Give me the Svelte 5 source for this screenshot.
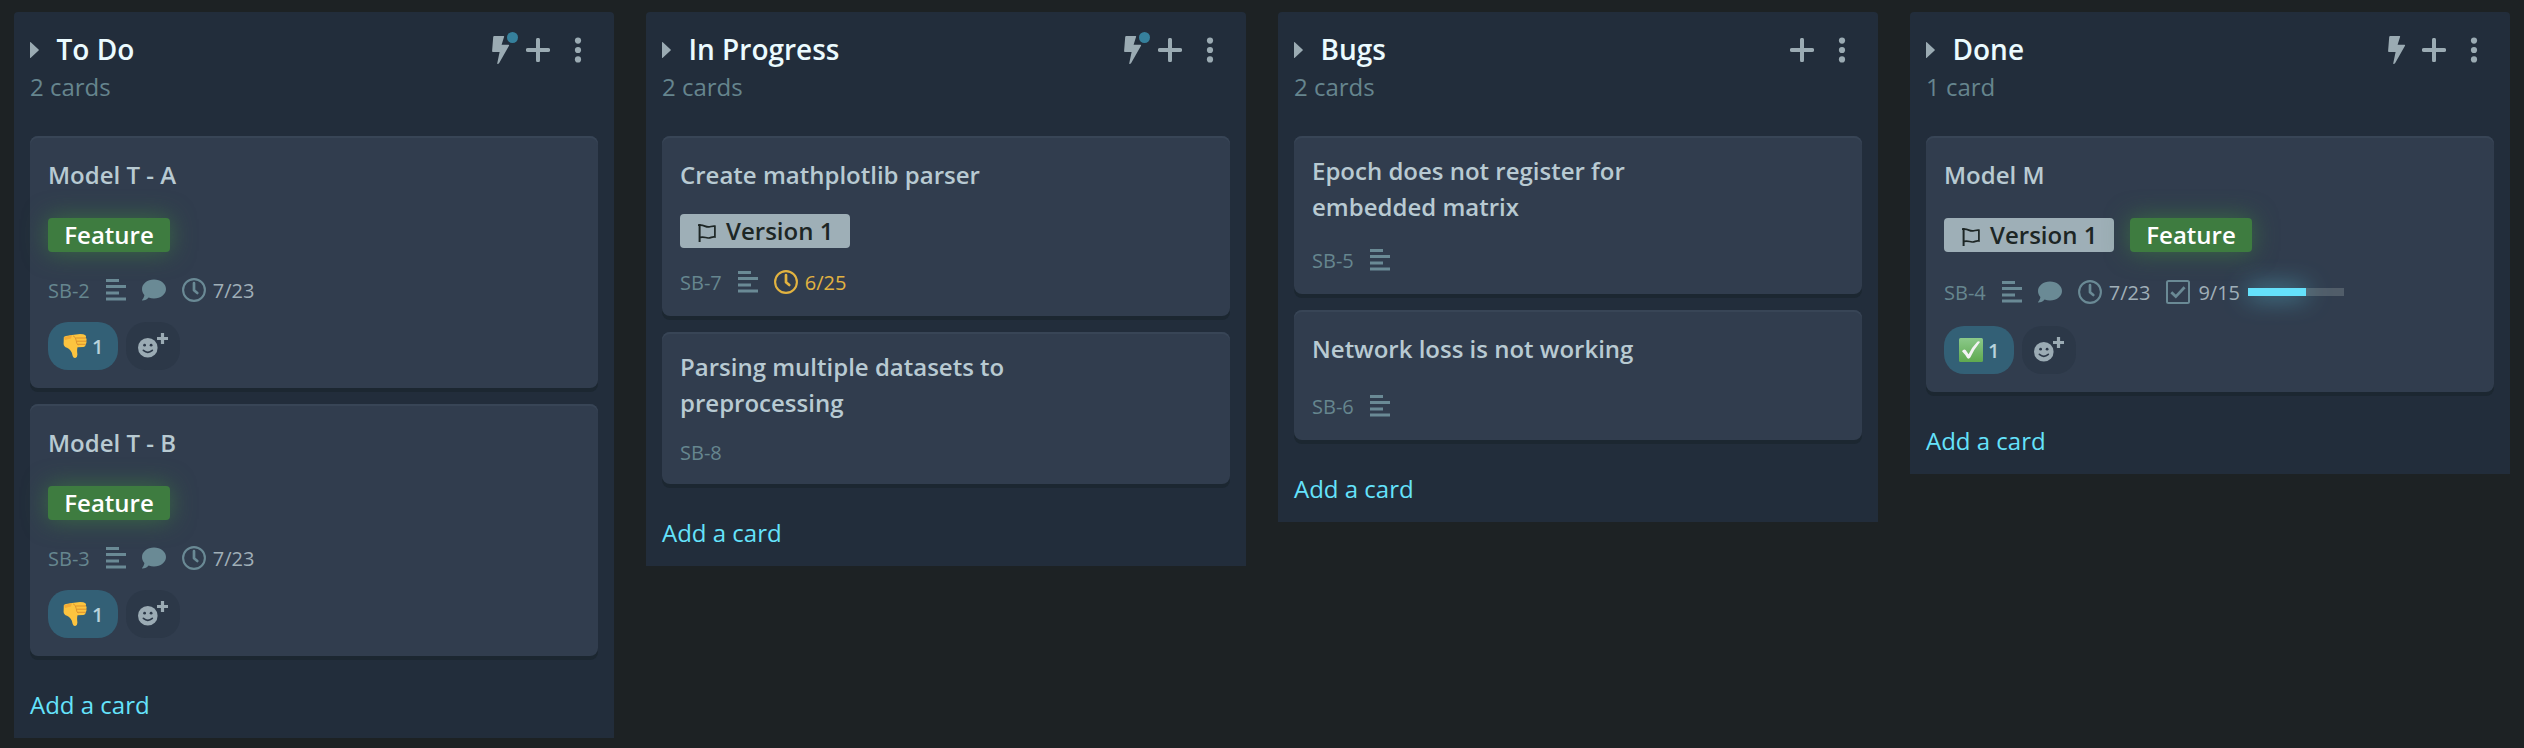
<script>
  const columns = [
    {
      title: 'To Do', count: '2 cards', bolt: true, dot: true,
      cards: [
        { title: ['Model T - A'], feature: true, id: 'SB-2', desc: true, comment: true, date: '7/23', reaction: 'down' },
        { title: ['Model T - B'], feature: true, id: 'SB-3', desc: true, comment: true, date: '7/23', reaction: 'down' }
      ]
    },
    {
      title: 'In Progress', count: '2 cards', bolt: true, dot: true,
      cards: [
        { title: ['Create mathplotlib parser'], version: true, id: 'SB-7', desc: true, date: '6/25', due: true },
        { title: ['Parsing multiple datasets to', 'preprocessing'], id: 'SB-8' }
      ]
    },
    {
      title: 'Bugs', count: '2 cards',
      cards: [
        { title: ['Epoch does not register for', 'embedded matrix'], id: 'SB-5', desc: true },
        { title: ['Network loss is not working'], id: 'SB-6', desc: true }
      ]
    },
    {
      title: 'Done', count: '1 card', bolt: true,
      cards: [
        { title: ['Model M'], version: true, feature: true, id: 'SB-4', desc: true, comment: true, date: '7/23', done: 9, total: 15, reaction: 'check' }
      ]
    }
  ];
</script>

<main class="board">
  {#each columns as col}
    <section class="column">
      <header>
        <svg class="arrow" width="10" height="18" viewBox="0 0 10 18"><path d="M0 1.5Q0 .6.8 1.2L8.6 8.4Q9.3 9 8.6 9.6L.8 16.8Q0 17.4 0 16.5z" /></svg>
        <h2>{col.title}</h2>
        <div class="tools">
          {#if col.bolt}
            <span class="bolt">
              <svg width="18" height="28" viewBox="0 0 18 28"><path d="M2.2 0H11.6Q12.4 0 12.1.8L9.6 8.8H16.4Q17.5 8.8 17 9.8L7.2 27Q6.6 28 5.4 28L5.2 27.4 7.6 16H.9Q0 16 .1 15L1.2.9Q1.3 0 2.2 0z" /></svg>
              {#if col.dot}<i></i>{/if}
            </span>
          {/if}
          <svg class="plus" width="24" height="24" viewBox="0 0 24 24"><path d="M12 1.8V22.2M1.8 12H22.2" fill="none" stroke="currentColor" stroke-width="4" stroke-linecap="round" /></svg>
          <svg width="8" height="26" viewBox="0 0 8 26"><circle cx="4" cy="3.6" r="3.1" /><circle cx="4" cy="13" r="3.1" /><circle cx="4" cy="22.4" r="3.1" /></svg>
        </div>
      </header>
      <p class="count">{col.count}</p>

      <div class="cards">
        {#each col.cards as card}
          <article class="card" class:bare={!card.desc}>
            <h3>{#each card.title as line}<span>{line}</span>{/each}</h3>
            {#if card.version || card.feature}
              <div class="badges" class:roomy={card.feature}>
                {#if card.version}
                  <span class="badge version">
                    <svg width="20" height="20" viewBox="0 0 20 20" fill="none" stroke="currentColor" stroke-width="1.7"><path d="M3.6 1V19" stroke-width="2" /><path d="M2 2.2H4C8 1.8 9.500 4.300 13 3.900C15 3.700 17 2.800 18.900 3.200V14C16 13.200 15 15.300 12 15C9 14.600 7.500 13.300 4 14.400" /></svg>
                    Version 1
                  </span>
                {/if}
                {#if card.feature}<span class="badge feature">Feature</span>{/if}
              </div>
            {/if}
            <div class="meta" class:tall={card.total}>
              <span class="id">{card.id}</span>
              {#if card.desc}
                <svg width="20" height="22" viewBox="0 0 20 22"><path d="M0 0H13V3H0zM0 6H20V9H0zM0 12.500H13V15.500H0zM0 18.500H20V21.500H0z" /></svg>
              {/if}
              {#if card.comment}
                <svg width="24" height="22" viewBox="0 0 24 22"><path d="M12 .5C18.600.500 24 4.700 24 10S18.600 19.500 12 19.500C10 19.500 8.200 19.200 6.600 18.500C5.200 20.200 3 21.500.300 21.500Q-.3 21.300.2 20.700C1.400 19.400 2.200 17.900 2.400 16C.9 14.400 0 12.300 0 10C0 4.700 5.400.5 12 .5z" /></svg>
              {/if}
              {#if card.date}
                <span class="date" class:due={card.due}>
                  <svg width="24" height="24" viewBox="0 0 24 24" fill="none" stroke="currentColor"><circle cx="12" cy="12" r="10.900" stroke-width="2.100" /><path d="M12 5.200V12.300L15.300 15" stroke-width="2.700" stroke-linecap="round" stroke-linejoin="round" /></svg>
                  {card.date}
                </span>
              {/if}
              {#if card.total}
                <span class="checks">
                  <svg width="24" height="24" viewBox="0 0 24 24" fill="none" stroke="currentColor"><rect x="1" y="1" width="22" height="22" rx="1.500" stroke-width="2" /><path d="M5.300 12.300L9.800 16.600 18.600 7.300" stroke-width="2.800" /></svg>
                  {card.done}/{card.total}
                  <span class="bar"><b style="width:{(card.done / card.total) * 100}%"></b></span>
                </span>
              {/if}
            </div>
            {#if card.reaction}
              <div class="reactions">
                <span class="pill active">
                  {#if card.reaction === 'down'}
                    <svg width="24" height="24" viewBox="0 0 24 24"><path d="M.8 3.200Q1.200 2.200 3 2L9 .9 17 0Q21 0 22 1Q23.600 2 22.700 3.700Q24.200 5 23.200 7Q24 8.800 22.600 10.200Q23 12.500 20.500 13L14.500 13.200Q13.800 16 14.300 19.500Q14.800 23.600 12.300 24Q10 24.200 9.500 21.500C9 17.500 7 15.200 4 13.800Q.8 12.800.6 10z" fill="#fcc43f" /><path d="M13.500 4H22.500M14 7.200H23M14.500 10.300H22.300M10.500 2Q13 3 13.200 6.500T15 11" fill="none" stroke="#dd922e" stroke-width="1" stroke-linecap="round" /><path d="M1 3.200L9 1.100 8 4.500 2 6z" fill="#f3ab35" /></svg>
                  {:else}
                    <svg width="24" height="24" viewBox="0 0 24 24"><defs><linearGradient id="tick" x1="0" y1="0" x2="0" y2="1"><stop offset="0" stop-color="#8bc98a" /><stop offset="1" stop-color="#5fa94f" /></linearGradient></defs><rect width="24" height="24" rx="1.500" fill="url(#tick)" /><path d="M3 13.300Q4.500 10.800 6.600 12L9.600 16.200Q13 9 18.300 3.700Q20 2.800 21 4.100Q15 11.500 11.300 19.500Q9.800 21.500 8.200 20Q6.200 16.500 3 13.300z" fill="#f3f3f3" /></svg>
                  {/if}
                  1
                </span>
                <span class="pill">
                  <svg width="31" height="26" viewBox="0 0 31 26"><circle cx="9.800" cy="14.700" r="9.800" /><path d="M24.500 0V11M19 5.500H30" stroke="currentColor" stroke-width="3.200" /><circle cx="6.600" cy="12.200" r="1.400" fill="#2c3848" /><circle cx="13.100" cy="12.200" r="1.400" fill="#2c3848" /><path d="M5.400 17.400Q9.800 21.200 14.300 17.400" fill="none" stroke="#2c3848" stroke-width="1.700" stroke-linecap="round" /></svg>
                </span>
              </div>
            {/if}
          </article>
        {/each}
      </div>
      <a class="add" href="#add">Add a card</a>
    </section>
  {/each}
</main>

<style>
  :global(body) { margin: 0; background: #1d2125; }
  .board {
    display: flex; align-items: flex-start; gap: 32px;
    box-sizing: border-box; height: 748px; padding: 12px 14px;
    background: #1d2224;
    font-family: 'Open Sans', sans-serif; color: #b8cad2;
  }
  svg { display: block; flex: none; fill: currentColor; }
  svg[fill='none'] { fill: none; }
  h2, h3, p { margin: 0; }
  .column {
    box-sizing: border-box; width: 600px; flex: none; padding: 18px 16px 0;
    background: #222d3b; border-radius: 4px 4px 0 0;
  }
  header { display: flex; align-items: center; height: 40px; color: #9babb3; }
  h2 { margin-left: 16.5px; padding-bottom: 2px; font-size: 28px; line-height: 38px; font-weight: 600; color: #ebfbff; }
  .tools { display: flex; align-items: center; margin-left: auto; padding-right: 16px; }
  .bolt { position: relative; margin-right: 16px; }
  .bolt i { position: absolute; left: 15px; top: -4px; width: 11px; height: 11px; border-radius: 50%; background: #36809c; }
  .plus { margin-right: 24px; }
  .count { height: 66px; font-size: 24px; line-height: 34px; color: #66858e; }
  .cards { display: grid; gap: 16px; }
  .card {
    padding: 17px 18px 18px; border-radius: 8px; background: #313d4e;
    box-shadow: 0 4px 0 #1c2731, inset 0 2px 0 #384556;
  }
  h3 { display: flex; flex-direction: column; justify-content: center; min-height: 44px; margin-bottom: -1px; font-size: 24px; line-height: 36px; font-weight: 600; }
  .badges { display: flex; gap: 16px; padding-top: 18px; margin-bottom: -2px; }
  .badges.roomy { padding-top: 22px; margin-bottom: 22px; }
  .badge { box-sizing: border-box; display: flex; align-items: center; height: 34px; padding: 0 16px; border-radius: 4px; font-size: 24px; line-height: 34px; font-weight: 600; }
  .version { width: 170px; gap: 10px; background: #9eafb7; color: #1d2625; }
  .version svg { position: relative; top: 2px; }
  .feature { width: 122px; justify-content: center; background: #3e7c40; color: #fff; box-shadow: 0 0 24px rgba(62, 124, 64, 0.75); }
  .meta { display: flex; align-items: center; gap: 16px; height: 32px; padding-top: 20px; font-size: 20px; line-height: 28px; color: #6a8a95; }
  .badges + .meta { padding-top: 0; margin-top: 20px; }
  .meta.tall { height: 36px; }
  .bare .meta { height: 24px; }
  .bare { padding-bottom: 20px; }
  .id { padding-top: 2px; color: #66868f; }
  .date, .checks { display: flex; align-items: center; gap: 7px; padding-top: 2px; color: #a0afb8; }
  .date svg, .checks svg { margin-top: -2px; color: #6a8a95; }
  .checks { gap: 8px; }
  .date.due, .date.due svg { color: #e2b340; }
  .bar { width: 96px; height: 8px; margin-top: -2px; background: #515d69; }
  .bar b { display: block; height: 8px; background: #65e1fb; box-shadow: 0 0 24px rgba(101, 225, 251, 0.7); }
  .reactions { display: flex; gap: 8px; margin-top: 16px; }
  .pill { box-sizing: border-box; display: flex; align-items: center; height: 48px; width: 54px; padding-left: 12px; border-radius: 20px; background: #2c3848; color: #9babb4; font-size: 20px; font-weight: 600; }
  .active { width: 70px; gap: 5px; padding-left: 15px; background: #336076; color: #b8d2dc; }
  .add { display: block; height: 82px; font-size: 24px; line-height: 97px; color: #65e3fc; text-decoration: none; }
</style>
